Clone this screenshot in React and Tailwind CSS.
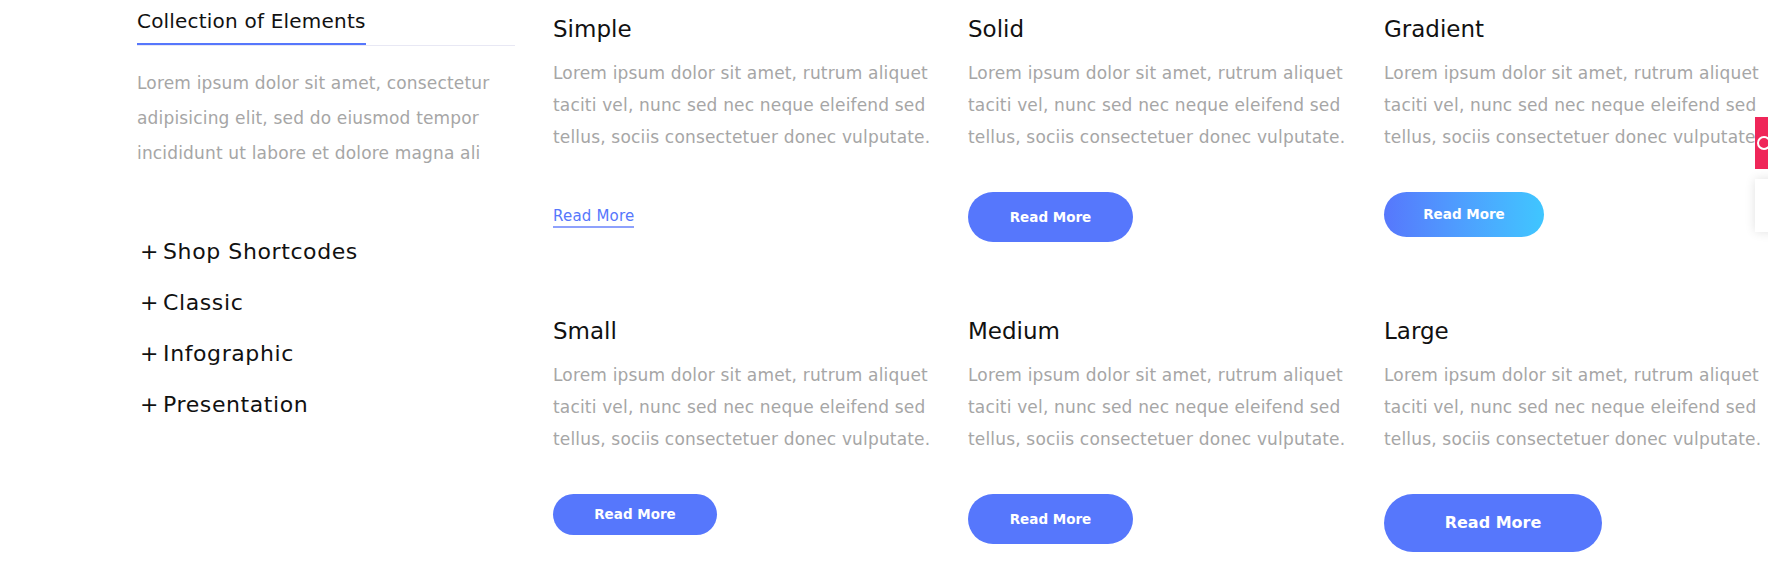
import React from "react";

const body =
  "Lorem ipsum dolor sit amet, rutrum aliquet taciti vel, nunc sed nec neque eleifend sed tellus, sociis consectetuer donec vulputate.";

const menu = ["Shop Shortcodes", "Classic", "Infographic", "Presentation"];

function Card({ title, children, gap = "mt-[39px]" }) {
  return (
    <div className="flex flex-col items-start">
      <h3 className="text-[23px] leading-[32px] text-[#111]">{title}</h3>
      <p className="mt-[12px] w-[390px] text-[17px] leading-[32px] tracking-[0.17px] text-[#a6a6a6]">{body}</p>
      <div className={gap}>{children}</div>
    </div>
  );
}

function Pill({ className, children }) {
  return (
    <button
      className={
        "flex items-center justify-center rounded-full font-semibold text-white " + className
      }
    >
      {children}
    </button>
  );
}

export default function App() {
  return (
    <div className="relative h-[573px] w-full overflow-hidden bg-white font-['DejaVu_Sans',sans-serif]">
      <div className="flex pl-[137px]">
        {/* sidebar */}
        <aside className="w-[378px] shrink-0 pt-[7px]">
          <div className="border-b border-[#e8e8f4]">
            <span className="inline-block border-b-2 border-[#5677fc] pb-[8px] text-[20px] leading-[28px] tracking-[0.2px] text-[#111]">
              Collection of Elements
            </span>
          </div>
          <p className="mt-[20px] text-[17px] leading-[35px] tracking-[0.17px] text-[#a6a6a6]">
            Lorem ipsum dolor sit amet, consectetur adipisicing elit, sed do eiusmod tempor incididunt ut labore et dolore magna ali
          </p>
          <ul className="mt-[55px] pl-[3px]">
            {menu.map((m) => (
              <li key={m} className="flex text-[22px] leading-[51px] tracking-[0.6px] text-[#111]">
                <span>+</span>
                <span className="ml-[4px]">{m}</span>
              </li>
            ))}
          </ul>
        </aside>

        {/* cards */}
        <div className="ml-[38px] grid shrink-0 grid-cols-[415px_416px_416px] gap-y-[73px] pt-[13px]">
          <Card title="Simple" gap="mt-[51px]">
            <a className="inline-block border-b-2 border-[#8ea1fc] text-[15px] leading-[20px] tracking-[0.2px] text-[#5677fc]">
              Read More
            </a>
          </Card>
          <Card title="Solid">
            <Pill className="h-[50px] w-[165px] bg-[#5677fc] text-[13.5px]">Read More</Pill>
          </Card>
          <Card title="Gradient">
            <Pill className="h-[45px] w-[160px] bg-gradient-to-r from-[#5677fc] to-[#3fc6ff] text-[13.5px]">
              Read More
            </Pill>
          </Card>
          <Card title="Small">
            <Pill className="h-[41px] w-[164px] bg-[#5677fc] text-[13.5px]">Read More</Pill>
          </Card>
          <Card title="Medium">
            <Pill className="h-[50px] w-[165px] bg-[#5677fc] text-[13.5px]">Read More</Pill>
          </Card>
          <Card title="Large">
            <Pill className="h-[58px] w-[218px] bg-[#5677fc] text-[16px]">Read More</Pill>
          </Card>
        </div>
      </div>

      {/* sticky side widgets */}
      <div className="absolute left-[1755px] top-[117px] h-[52px] w-[40px] bg-[#ef2659]">
        <div className="ml-[2px] mt-[19px] h-[14px] w-[14px] rounded-full border-2 border-white" />
      </div>
      <div className="absolute left-[1755px] top-[179px] h-[53px] w-[40px] bg-white shadow-[0_0_10px_rgba(0,0,0,0.12)]" />
    </div>
  );
}
